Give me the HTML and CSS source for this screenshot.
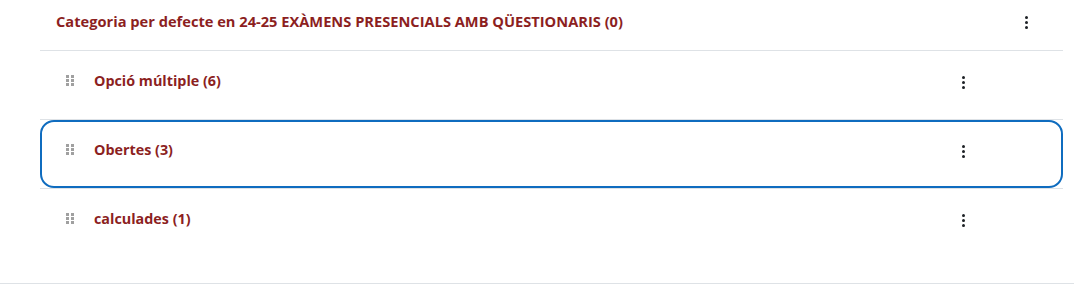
FILE: index.html
```html
<!DOCTYPE html>
<html lang="ca">
<head>
    <meta charset="UTF-8">
    <title>Categories</title>
    <link rel="stylesheet" href="styles.css">
</head>
<body>
    <div class="category">
        <div class="category-header">
            <a class="category-name" href="#">Categoria per defecte en 24-25 EXÀMENS PRESENCIALS AMB QÜESTIONARIS (0)</a>
            <button class="kebab" aria-label="Accions"><span></span><span></span><span></span></button>
        </div>
        <ul class="subcategories">
            <li class="item">
                <div class="item-inner">
                    <svg class="handle" width="8" height="11" viewBox="0 0 8 11"><rect x="0" y="0" width="3" height="3"/><rect x="5" y="0" width="3" height="3"/><rect x="0" y="4" width="3" height="3"/><rect x="5" y="4" width="3" height="3"/><rect x="0" y="8" width="3" height="3"/><rect x="5" y="8" width="3" height="3"/></svg>
                    <a class="item-name" href="#">Opció múltiple (6)</a>
                    <button class="kebab" aria-label="Accions"><span></span><span></span><span></span></button>
                </div>
            </li>
            <li class="item">
                <div class="item-inner focused">
                    <svg class="handle" width="8" height="11" viewBox="0 0 8 11"><rect x="0" y="0" width="3" height="3"/><rect x="5" y="0" width="3" height="3"/><rect x="0" y="4" width="3" height="3"/><rect x="5" y="4" width="3" height="3"/><rect x="0" y="8" width="3" height="3"/><rect x="5" y="8" width="3" height="3"/></svg>
                    <a class="item-name" href="#">Obertes (3)</a>
                    <button class="kebab" aria-label="Accions"><span></span><span></span><span></span></button>
                </div>
            </li>
            <li class="item last">
                <div class="item-inner">
                    <svg class="handle" width="8" height="11" viewBox="0 0 8 11"><rect x="0" y="0" width="3" height="3"/><rect x="5" y="0" width="3" height="3"/><rect x="0" y="4" width="3" height="3"/><rect x="5" y="4" width="3" height="3"/><rect x="0" y="8" width="3" height="3"/><rect x="5" y="8" width="3" height="3"/></svg>
                    <a class="item-name" href="#">calculades (1)</a>
                    <button class="kebab" aria-label="Accions"><span></span><span></span><span></span></button>
                </div>
            </li>
        </ul>
    </div>
    <div class="bottom-rule"></div>
</body>
</html>
```

FILE: styles.css
```css
* {
    margin: 0;
    padding: 0;
    box-sizing: border-box;
}
body {
    background-color: #fff;
    font-family: "Open Sans", "Noto Sans", sans-serif;
    font-size: 14px;
    line-height: 20px;
}
.category {
    margin-left: 40px;
    width: 1023px;
}
.category-header {
    display: flex;
    align-items: flex-start;
    height: 51px;
    padding: 11px 0 0 16px;
    border-bottom: 1px solid #dee2e6;
}
.category-name,
.item-name {
    color: #8c1f1f;
    font-weight: 700;
    text-decoration: none;
}
.category-name {
    flex: 1;
    font-size: 14.65px;
}
.category-header .kebab {
    margin: 5px 34px 0 0;
}
.subcategories {
    list-style: none;
}
.item {
    border-bottom: 1px solid #dee2e6;
}
.item.last {
    border-bottom: none;
}
.item-inner {
    display: flex;
    align-items: flex-start;
    height: 68px;
    padding: 18px 0 0 24px;
    border: 2px solid transparent;
    border-radius: 14px;
}
.item-inner.focused {
    border-color: #0f6cbf;
}
.handle {
    flex: none;
    margin: 4px 20px 0 0;
    fill: #a0a0a0;
}
.item-name {
    flex: 1;
    font-size: 14.35px;
}
.item .kebab {
    margin: 5px 95px 0 0;
}
.kebab {
    display: flex;
    flex-direction: column;
    gap: 1.6px;
    width: 4px;
    background: none;
    border: none;
    cursor: pointer;
}
.kebab span {
    width: 3.4px;
    height: 3.4px;
    border-radius: 50%;
    background-color: #1d2125;
}
.bottom-rule {
    margin-top: 26px;
    border-top: 1px solid #dee2e6;
}
```
